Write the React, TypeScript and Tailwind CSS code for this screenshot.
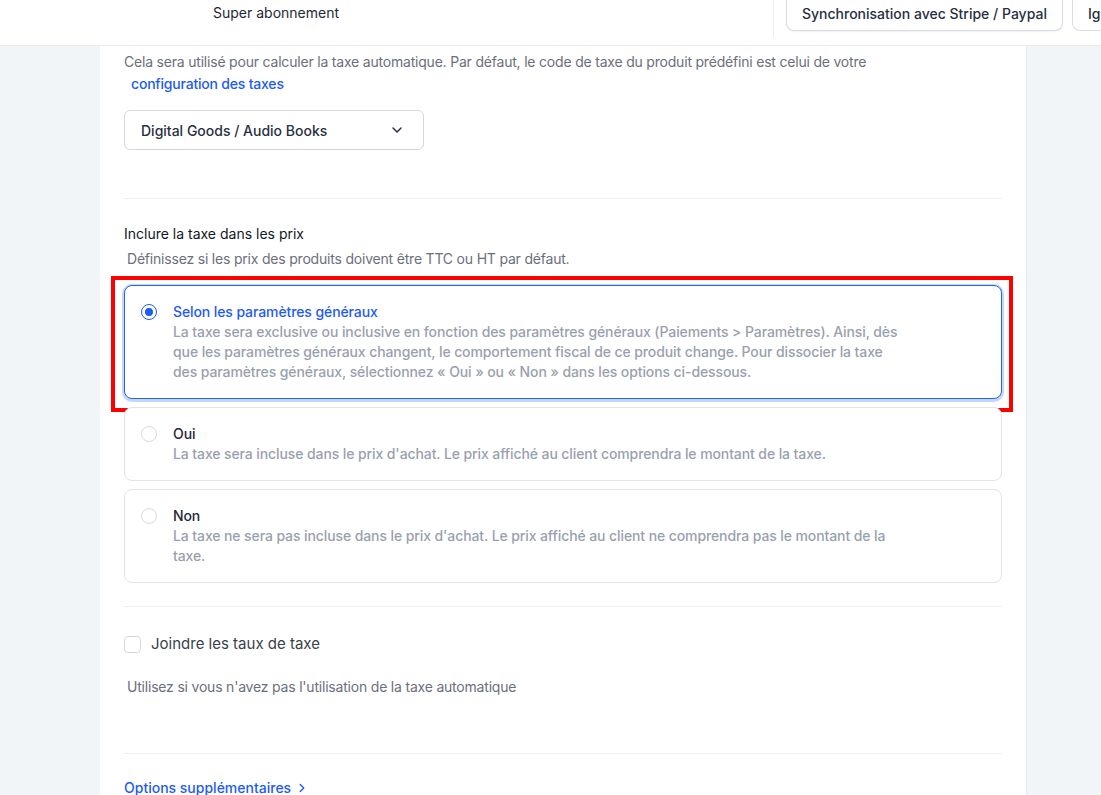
import { ChevronDown, ChevronRight } from "lucide-react";

const options = [
  {
    id: "general",
    title: "Selon les paramètres généraux",
    text: "La taxe sera exclusive ou inclusive en fonction des paramètres généraux (Paiements > Paramètres). Ainsi, dès que les paramètres généraux changent, le comportement fiscal de ce produit change. Pour dissocier la taxe des paramètres généraux, sélectionnez « Oui » ou « Non » dans les options ci-dessous.",
  },
  {
    id: "oui",
    title: "Oui",
    text: "La taxe sera incluse dans le prix d'achat. Le prix affiché au client comprendra le montant de la taxe.",
  },
  {
    id: "non",
    title: "Non",
    text: "La taxe ne sera pas incluse dans le prix d'achat. Le prix affiché au client ne comprendra pas le montant de la taxe.",
  },
];

function Radio({ checked }: { checked: boolean }) {
  return checked ? (
    <span className="mt-[2px] flex h-4 w-4 shrink-0 items-center justify-center rounded-full border-[1.5px] border-[#1d5bf5]">
      <span className="h-2 w-2 rounded-full bg-[#1d5bf5]" />
    </span>
  ) : (
    <span className="mt-[2px] h-4 w-4 shrink-0 rounded-full border border-[#d8dbe2] bg-white" />
  );
}

export default function App() {
  const selected = "general";

  return (
    <div className="h-[795px] overflow-hidden bg-[#f1f5f8] font-['Inter',sans-serif] text-[14px]">
      {/* Barre d'onglets */}
      <header className="flex h-[46px] items-start overflow-hidden border-b border-[#e8eaee] bg-white">
        <div className="w-[773px] shrink-0 pl-[213px] pt-[3px] leading-5 text-[#1f2937]">
          Super abonnement
        </div>
        <div className="h-[37px] w-px shrink-0 bg-[#eceef1]" />
        <div className="-mt-1 flex shrink-0 gap-[9px] pl-3">
          <button className="h-[35px] shrink-0 whitespace-nowrap rounded-b-lg border border-t-0 border-[#d9dce3] bg-white px-[15px] font-medium text-[#27303f] shadow-[0_1px_2px_rgba(16,24,40,0.06)]">
            Synchronisation avec Stripe / Paypal
          </button>
          <button className="h-[35px] shrink-0 whitespace-nowrap rounded-b-lg border border-t-0 border-[#d9dce3] bg-white px-[15px] font-medium text-[#27303f]">
            Ignorer
          </button>
        </div>
      </header>

      <div className="pl-[100px]">
        <section className="w-[927px] border-r border-[#e6e9ee] bg-white pl-6 pr-[24px] pt-[5px] pb-10">
          <p className="leading-[22px] tracking-[-0.2px] text-[#6b6f7c]">
            Cela sera utilisé pour calculer la taxe automatique. Par défaut, le code de taxe du produit prédéfini est celui de votre{" "}
            <br />
            <a className="ml-[7px] font-medium text-[#1d5bf5]">configuration des taxes</a>
          </p>

          <button className="mt-[15px] flex h-10 w-[300px] items-center justify-between rounded-md border border-[#d5d8df] bg-white pl-4 pr-[18px] font-medium text-[#27303f]">
            Digital Goods / Audio Books
            <ChevronDown size={16} strokeWidth={2.2} className="text-[#27303f]" />
          </button>

          <hr className="mt-[48px] border-[#eceef1]" />

          <h3 className="mt-[25px] leading-5 text-[#111827]">Inclure la taxe dans les prix</h3>
          <p className="ml-[3px] mt-[5px] leading-5 tracking-[-0.2px] text-[#6b6f7c]">
            Définissez si les prix des produits doivent être TTC ou HT par défaut.
          </p>

          <div className="mt-[16px] flex flex-col gap-2">
            {options.map((o) => {
              const on = o.id === selected;
              return (
                <div key={o.id} className="relative">
                  <label
                    className={
                      on
                        ? "flex gap-4 rounded-lg border border-[#2463eb] bg-white px-4 py-4 shadow-[0_1px_0_2px_#c6d6fb]"
                        : "flex gap-4 rounded-lg border border-[#e2e4e9] bg-white px-4 py-4"
                    }
                  >
                    <Radio checked={on} />
                    <div className="max-w-[735px] leading-5 tracking-[-0.1px]">
                      <div className={on ? "font-medium text-[#1d5bf5]" : "font-medium text-[#1f2937]"}>
                        {o.title}
                      </div>
                      <div className="font-medium text-[#9a9fae]">{o.text}</div>
                    </div>
                  </label>
                  {on && (
                    <div className="pointer-events-none absolute -bottom-[13px] -left-[13px] -right-[11px] -top-[9px] border-4 border-[#ff0000]" />
                  )}
                </div>
              );
            })}
          </div>

          <hr className="mt-[23px] border-[#eceef1]" />

          <label className="mt-[27px] flex items-center gap-[10px] leading-5">
            <span className="h-[17px] w-[17px] rounded-[4px] border border-[#d5d8df] bg-white" />
            <span className="text-[15px] text-[#3a3f4b]">Joindre les taux de taxe</span>
          </label>

          <p className="ml-[3px] mt-[23px] leading-5 tracking-[-0.2px] text-[#6b6f7c]">
            Utilisez si vous n'avez pas l'utilisation de la taxe automatique
          </p>

          <hr className="mt-[56px] border-[#eceef1]" />

          <a className="mt-6 flex items-center gap-1 font-medium leading-5 text-[#1d5bf5]">
            Options supplémentaires
            <ChevronRight size={14} strokeWidth={2.4} />
          </a>
        </section>
      </div>
    </div>
  );
}
